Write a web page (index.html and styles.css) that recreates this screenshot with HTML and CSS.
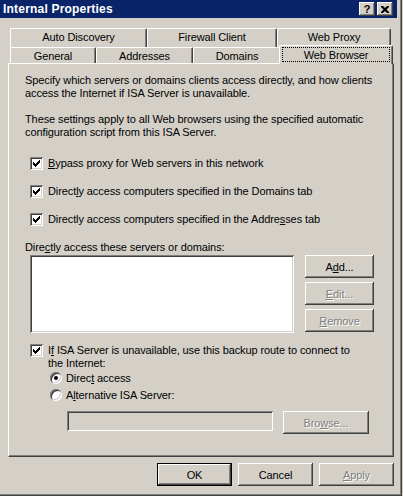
FILE: index.html
```html
<!DOCTYPE html>
<html lang="en">
<head>
    <meta charset="UTF-8">
    <title>Internal Properties</title>
    <link rel="stylesheet" href="styles.css">
</head>
<body>
    <div class="window">
        <div class="titlebar">
            <span class="title">Internal Properties</span>
            <div class="caption-buttons">
                <span class="cap-btn help">?</span>
                <span class="cap-btn close">
                    <svg width="8" height="7" viewBox="0 0 8 7"><path d="M0 0h2l2 2 2-2h2v1L5.5 3.5 8 6v1H6L4 5 2 7H0V6l2.5-2.5L0 1z" fill="#000"/></svg>
                </span>
            </div>
        </div>

        <div class="client">
            <div class="tabs">
                <div class="tab-row back">
                    <div class="tab" style="width:137px">Auto Discovery</div>
                    <div class="tab" style="width:130px">Firewall Client</div>
                    <div class="tab" style="width:114px">Web Proxy</div>
                </div>
                <div class="tab-row front">
                    <div class="tab" style="width:86px">General</div>
                    <div class="tab" style="width:97px">Addresses</div>
                    <div class="tab" style="width:88px">Domains</div>
                    <div class="tab selected" style="width:114px"><span class="focus">Web Browser</span></div>
                </div>
            </div>

            <div class="panel">
                <p class="para">Specify which servers or domains clients access directly, and how clients<br>access the Internet if ISA Server is unavailable.</p>
                <p class="para second">These settings apply to all Web browsers using the specified automatic<br>configuration script from this ISA Server.</p>

                <label class="check first-check"><span class="box checked"></span><span><u>B</u>ypass proxy for Web servers in this network</span></label>
                <label class="check"><span class="box checked"></span><span>Direct<u>l</u>y access computers specified in the Domains tab</span></label>
                <label class="check"><span class="box checked"></span><span>Directly access computers specified in the Addre<u>s</u>ses tab</span></label>

                <div class="list-label">Dire<u>c</u>tly access these servers or domains:</div>
                <div class="list-row">
                    <div class="listbox"></div>
                    <div class="side-buttons">
                        <button class="btn">A<u>d</u>d...</button>
                        <button class="btn" disabled><u>E</u>dit...</button>
                        <button class="btn" disabled><u>R</u>emove</button>
                    </div>
                </div>

                <label class="check backup"><span class="box checked"></span><span>I<u>f</u> ISA Server is unavailable, use this backup route to connect to<br>the Internet:</span></label>
                <label class="radio first-radio"><span class="dot on"></span><span>Direc<u>t</u> access</span></label>
                <label class="radio"><span class="dot"></span><span>A<u>l</u>ternative ISA Server:</span></label>
                <div class="server-row">
                    <div class="textbox"></div>
                    <button class="btn browse" disabled>Bro<u>w</u>se...</button>
                </div>
            </div>

            <div class="footer">
                <button class="btn wide default">OK</button>
                <button class="btn wide">Cancel</button>
                <button class="btn wide" disabled><u>A</u>pply</button>
            </div>
        </div>
    </div>
</body>
</html>
```

FILE: styles.css
```css
body {
    margin: 0;
    background-color: #d4d0c8;
    font-family: Tahoma, "Liberation Sans", Arial, sans-serif;
    font-size: 11px;
    letter-spacing: -0.1px;
    color: #000;
}

.window {
    width: 402px;
    height: 496px;
    box-sizing: border-box;
    border-right: 1px solid #404040;
    border-bottom: 1px solid #404040;
    box-shadow: inset -1px -1px #808080;
    background-color: #d4d0c8;
}

.titlebar {
    height: 18px;
    margin-right: 4px;
    background-color: #0a246a;
    color: #fff;
    display: flex;
    align-items: center;
    justify-content: space-between;
    padding-left: 3px;
    padding-right: 4px;
}

.title {
    font-weight: bold;
    font-size: 12px;
    letter-spacing: 0.2px;
}

.caption-buttons {
    display: flex;
    gap: 2px;
}

.cap-btn {
    width: 16px;
    height: 14px;
    box-sizing: border-box;
    background-color: #d4d0c8;
    box-shadow: inset -1px -1px #404040, inset 1px 1px #fff, inset -2px -2px #808080;
    color: #000;
    font-weight: bold;
    font-size: 11px;
    display: flex;
    align-items: center;
    justify-content: center;
}

.client {
    padding: 10px 0 0 8px;
}

/* tabs */
.tabs {
    padding-left: 2px;
}

.tab-row {
    display: flex;
}

.tab-row.back {
    height: 19px;
}

.tab-row.front {
    height: 16px;
    align-items: flex-end;
}

.tab {
    box-sizing: border-box;
    height: 100%;
    border-top: 1px solid #fff;
    border-left: 1px solid #fff;
    border-right: 1px solid #404040;
    border-radius: 2px 2px 0 0;
    box-shadow: inset -1px 0 #808080;
    display: flex;
    justify-content: center;
    padding-top: 2px;
    white-space: nowrap;
}

.tab.selected {
    position: relative;
    z-index: 1;
    height: 19px;
    margin: 0 -2px -1px -2px;
    background-color: #d4d0c8;
    padding: 1px 2px 2px 2px;
}

.focus {
    flex: 1;
    text-align: center;
    border: 1px dotted #000;
    line-height: 14px;
}

/* panel */
.panel {
    width: 386px;
    height: 394px;
    box-sizing: border-box;
    border-top: 1px solid #fff;
    border-left: 1px solid #fff;
    border-right: 1px solid #404040;
    border-bottom: 1px solid #404040;
    box-shadow: inset -1px -1px #808080;
    padding: 10px 0 0 16px;
}

.para {
    margin: 0;
    line-height: 13px;
}

.para.second {
    margin-top: 13px;
}

.check,
.radio {
    display: flex;
    align-items: flex-start;
    line-height: 13px;
    margin-top: 15px;
    margin-left: 5px;
}

.check.first-check {
    margin-top: 18px;
}

.box {
    flex: none;
    width: 13px;
    height: 13px;
    box-sizing: border-box;
    margin-right: 5px;
    background-color: #fff;
    box-shadow: inset 1px 1px #808080, inset -1px -1px #fff, inset 2px 2px #404040, inset -2px -2px #d4d0c8;
}

.box.checked {
    background-repeat: no-repeat;
    background-image: url("data:image/svg+xml;utf8,<svg xmlns='http://www.w3.org/2000/svg' width='13' height='13'><path d='M3 5h1v1h1v1h1V6h1V5h1V4h1V3h1v3H9v1H8v1H7v1H6v1H5V9H4V8H3z' fill='black'/></svg>");
}

.list-label {
    margin-top: 15px;
    line-height: 13px;
}

.list-row {
    display: flex;
    margin-top: 1px;
    margin-left: 5px;
}

.listbox {
    width: 264px;
    height: 78px;
    background-color: #fff;
    box-shadow: inset 1px 1px #808080, inset -1px -1px #fff, inset 2px 2px #404040, inset -2px -2px #d4d0c8;
}

.side-buttons {
    display: flex;
    flex-direction: column;
    gap: 4px;
    margin-left: 11px;
}

.btn {
    width: 69px;
    height: 23px;
    padding: 0;
    border: none;
    background-color: #d4d0c8;
    font-family: inherit;
    font-size: 11px;
    letter-spacing: inherit;
    color: #000;
    box-shadow: inset -1px -1px #404040, inset 1px 1px #fff, inset -2px -2px #808080;
}

.btn:disabled {
    color: #808080;
    text-shadow: 1px 1px #fff;
}

.check.backup {
    margin-top: 11px;
}

.radio {
    margin-left: 25px;
    margin-top: 4px;
}

.radio.first-radio {
    margin-top: 2px;
}

.dot {
    flex: none;
    width: 12px;
    height: 12px;
    margin-right: 4px;
    border-radius: 50%;
    background-color: #fff;
    box-shadow: inset 1px 1px #808080, inset -1px -1px #fff, inset 2px 2px #404040, inset -2px -2px #d4d0c8;
    display: flex;
    align-items: center;
    justify-content: center;
}

.dot.on::after {
    content: "";
    width: 4px;
    height: 4px;
    border-radius: 50%;
    background-color: #000;
}

.server-row {
    display: flex;
    align-items: flex-start;
    margin-top: 9px;
    margin-left: 42px;
}

.textbox {
    width: 206px;
    height: 20px;
    box-shadow: inset 1px 1px #808080, inset -1px -1px #fff, inset 2px 2px #404040, inset -2px -2px #d4d0c8;
}

.btn.browse {
    width: 86px;
    margin-left: 10px;
}

/* bottom buttons */
.footer {
    width: 386px;
    display: flex;
    justify-content: flex-end;
    gap: 6px;
    margin-top: 6px;
}

.btn.wide {
    width: 75px;
}

.btn.default {
    box-shadow: inset 0 0 0 1px #000, inset -2px -2px #404040, inset 2px 2px #fff, inset -3px -3px #808080;
}
```
